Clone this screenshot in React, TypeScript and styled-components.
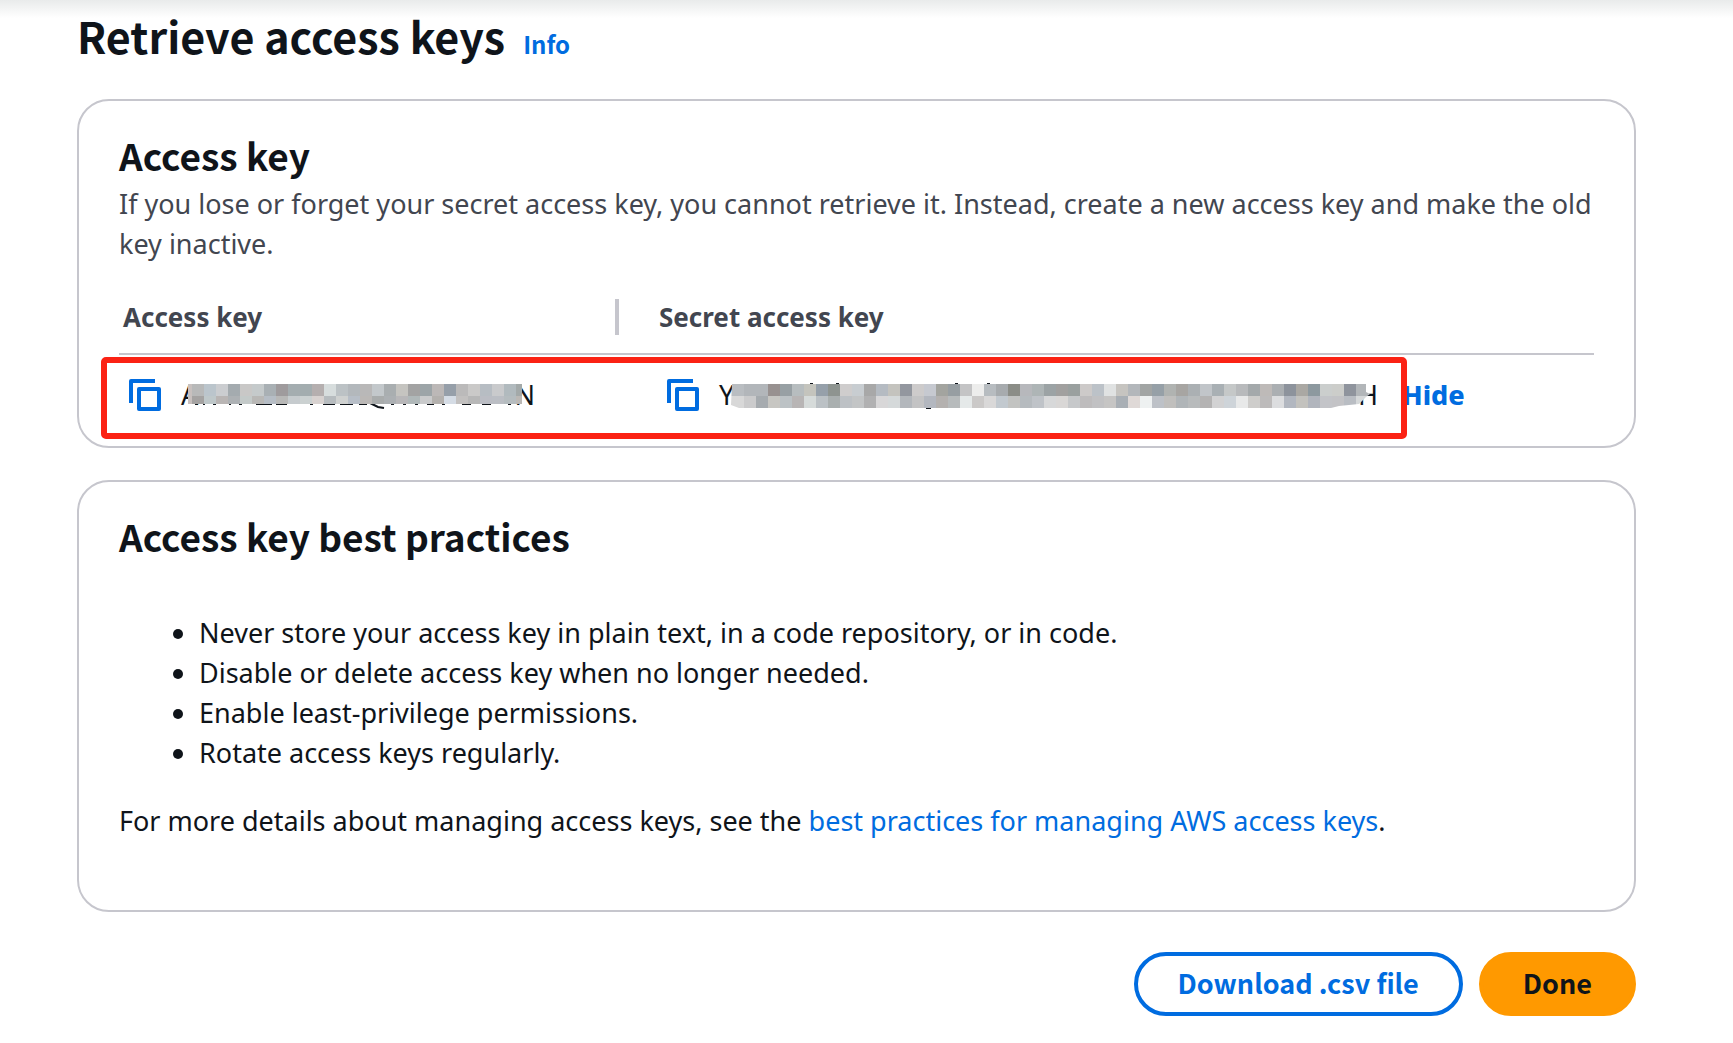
import React from 'react';
import styled, { createGlobalStyle } from 'styled-components';

const headingFont = `'Noto Sans CJK SC', 'Noto Sans', sans-serif`;
const bodyFont = `'Noto Sans', 'Open Sans', sans-serif`;

const color = {
  heading: '#0f141a',
  text: '#0f141a',
  muted: '#424650',
  border: '#c6c6cd',
  link: '#006ce0',
  primary: '#ff9900',
  highlight: '#fb2214',
};

const GlobalStyle = createGlobalStyle`
  * { box-sizing: border-box; }
  body {
    margin: 0;
    background: #ffffff;
    color: ${color.text};
    font: 400 27px/40px ${bodyFont};
  }
`;

const Page = styled.div`
  padding: 7px 97px 24px 77px;
  background: linear-gradient(#e9ebeb, #ffffff) top / 100% 18px no-repeat;
`;

const PageHeader = styled.header`
  display: flex;
  align-items: baseline;
  gap: 18px;
  margin-bottom: 36px;
`;

const PageTitle = styled.h1`
  margin: 0;
  font: 700 43px/56px ${headingFont};
  color: ${color.heading};
`;

const Link = styled.a`
  color: ${color.link};
  text-decoration: none;
`;

const InfoLink = styled(Link)`
  font: 700 24px/32px ${headingFont};
`;

const Card = styled.section<{ $bottom: number }>`
  border: 2px solid ${color.border};
  border-radius: 32px;
  padding: 30px 40px ${p => p.$bottom}px;
  background: #ffffff;

  & + & {
    margin-top: 32px;
  }
`;

const CardTitle = styled.h2`
  margin: 0;
  font: 700 37px/48px ${headingFont};
  color: ${color.heading};
`;

const Description = styled.p`
  margin: 5px 0 18px;
  color: ${color.muted};
`;

const TableFrame = styled.div`
  position: relative;
`;

const KeyTable = styled.table`
  width: 100%;
  table-layout: fixed;
  border-collapse: separate;
  border-spacing: 0;
`;

const KeyColumn = styled.col`
  width: 500px;
`;

const HeadCell = styled.th<{ $inset: number }>`
  padding: 15px 0 16px ${p => p.$inset}px;
  border-bottom: 2px solid ${color.border};
  color: ${color.muted};
  font: 700 26px/40px ${bodyFont};
  text-align: left;
`;

const HeadContent = styled.div`
  display: flex;
  align-items: center;
  justify-content: space-between;
`;

const Divider = styled.span`
  width: 4px;
  height: 36px;
  background: ${color.border};
`;

const Cell = styled.td<{ $inset: number }>`
  padding: 20px 0 20px ${p => p.$inset}px;
`;

const CellContent = styled.div`
  display: flex;
  align-items: center;
  gap: 20px;
`;

const IconButton = styled.button`
  display: flex;
  padding: 0;
  border: 0;
  background: none;
  color: ${color.link};
  cursor: pointer;
`;

const KeyValue = styled.span<{ $width: number }>`
  position: relative;
  display: flex;
  justify-content: space-between;
  flex: none;
  width: ${p => p.$width}px;
`;

const MosaicSvg = styled.svg`
  position: absolute;
  left: 0;
  top: 8px;
`;

const TextButton = styled.button`
  padding: 0 4px;
  border: 0;
  background: none;
  color: ${color.link};
  font: 800 27px/40px ${bodyFont};
  cursor: pointer;
`;

const Highlight = styled.div`
  position: absolute;
  left: -18px;
  top: 75px;
  width: 1306px;
  height: 82px;
  border: 6px solid ${color.highlight};
  border-radius: 5px;
  pointer-events: none;
`;

const PracticeList = styled.ul`
  margin: 53px 0 28px;
  padding: 0 0 0 80px;
`;

const Paragraph = styled.p`
  margin: 0;
`;

const Actions = styled.footer`
  display: flex;
  justify-content: flex-end;
  gap: 16px;
  margin-top: 40px;
`;

const Button = styled.button<{ $primary?: boolean }>`
  height: 64px;
  padding: 0 40px 2px;
  border: 4px solid ${p => (p.$primary ? color.primary : color.link)};
  border-radius: 32px;
  background: ${p => (p.$primary ? color.primary : '#ffffff')};
  color: ${p => (p.$primary ? color.heading : color.link)};
  font: 700 27px/40px ${headingFont};
  cursor: pointer;
`;

const CopyIcon = () => (
  <svg width="32" height="32" viewBox="0 0 32 32" fill="none" stroke="currentColor" strokeWidth="4" strokeLinejoin="round" aria-hidden="true">
    <path d="M2 24V2H26" />
    <path d="M10 10H30V30H10Z" />
  </svg>
);

type Mark = [x: number, y: number, width: number, height: number];

interface MosaicProps {
  id: string;
  width: number;
  start: number;
  rows: string[];
  outline: string;
  marks: Mark[];
  tail?: string;
}

const CELL = 12;

/* Pixelated cover drawn over the hidden part of a key. */
const Mosaic = ({ id, width, start, rows, outline, marks, tail }: MosaicProps) => (
  <MosaicSvg width={width} height="32" viewBox={`0 0 ${width} 32`} aria-hidden="true" shapeRendering="crispEdges">
    <clipPath id={id}>
      <path d={outline} />
    </clipPath>
    {marks.map(([x, y, w, h]) => (
      <rect key={`${x}-${y}`} x={x} y={y} width={w} height={h} fill={color.text} />
    ))}
    {tail && <path d={tail} stroke={color.text} strokeWidth="2" fill="none" shapeRendering="auto" />}
    <g clipPath={`url(#${id})`}>
      {rows.map((row, r) =>
        row.split(' ').map((c, i) => (
          <rect key={`${r}-${i}`} x={start + i * CELL} y={1 + r * CELL} width={CELL} height={CELL} fill={`#${c}`} />
        )),
      )}
    </g>
  </MosaicSvg>
);

const accessRows = [
  'c8c0be b8b9b9 bbc5cc cbcdd0 a4abaf c9c8c7 c5cacb a9b0b4 9f9b9d a4adb0 a3adaf b5afaf d7dddd bcc2c5 b3b8bc b9b8b8 c3c8cb a9aeb0 c5c4c0 a3a3a3 9da5a8 bcb8b7 969fa9 bbbaba cac9c8 b7bdc3 c9cacc b1babe a3a9a9',
  'c8c0be a5a3a2 bfc8ca b9b5b4 adb1b4 c4cac9 b9b8b6 b6bdc5 b8b8b7 c6cbce cbd1d1 d8d2d0 b7bcbf cfd1d0 b7bec7 bbb8b6 a9acac acb0b3 b8b7b9 b0b8b9 cacbcc b4b1ae d5dce5 c2c0bf b7b7b7 bbbdc4 bbbec4 b5bcbf bbb8b5',
];

const secretRows = [
  'b9bdc1 b9bdc1 b2b6ba b2b6ba 989190 98a0a4 b7bdbf c4c4bd 96a0aa 8e9490 cfcdcd c8cdd1 a8a8a8 b5bbc2 c4c3be 93979f cdcbcb c6c9d0 a3a49f 979ea2 c4c4c5 ededec b7bcc0 a7abae 8b8d87 b7b8bc aeb5b6 9ca3a5 a1a09f 9aa09f cdcac9 bcc2c8 e0e2e2 c6c4c0 b3b7bb a2a5a4 96a0a7 b0b3b1 a7a5a2 abb0b3 c1c5c9 a9b0b4 c5c8c8 b8babc a4a9ab bebab8 abafb2 8d939c aaa8a3 8d999f cbcecd cccdca 8f949d b2b6b9 c8cacc',
  'd8d8d8 d8d8d8 cbcbcc a6abaf c7c6c2 bcc2c5 b8b5b5 d6dbda bbc1c5 a9afaf bdc1c5 c3c5c6 b1b1b2 d8d7d8 d5d9da b3b7bc c3c3c4 b3b7bf b4b1af b7bbbc e5e9e9 cbc9c8 d9d8d8 c2c9cf c2c3c1 b6bbbf bfc3c8 d7d8d9 d9d7d6 c6c8ca bebcbd c1c1c3 c6c5c4 a9afb5 dfd9d7 eef1f1 bdc1c7 c0bfbd b0b5b8 b8bbbc b4b3b3 d2d2d3 ced4d9 e8e9e9 cecdcb bdbbbb dcdddf b2b7c0 c3c2be b1b5bd c3c4c8 c3c3c6 b9bdc3 d5d8d9 d5d8d9',
];

const accessMarks: Mark[] = [
  [14, 21, 3, 1], [22, 21, 2, 1], [32, 21, 3, 1], [48, 21, 2, 1], [58, 21, 3, 1], [75, 21, 16, 1],
  [95, 21, 11, 1], [129, 21, 3, 1], [142, 21, 12, 1], [159, 21, 13, 1], [178, 20, 8, 2],
  [210, 21, 3, 1], [222, 21, 3, 1], [234, 21, 3, 1], [246, 21, 7, 1], [261, 21, 3, 1],
  [281, 21, 9, 1], [301, 21, 9, 1], [327, 21, 3, 1],
];

const secretMarks: Mark[] = [
  [91, 0, 3, 1], [117, 0, 3, 1], [236, 0, 3, 1], [268, 0, 3, 1], [207, 25, 5, 1],
];

export default function App() {
  return (
    <>
      <GlobalStyle />
      <Page>
        <PageHeader>
          <PageTitle>Retrieve access keys</PageTitle>
          <InfoLink href="#info">Info</InfoLink>
        </PageHeader>

        <main>
          <Card $bottom={11}>
            <CardTitle>Access key</CardTitle>
            <Description>
              If you lose or forget your secret access key, you cannot retrieve it. Instead, create a new access key and
              make the old key inactive.
            </Description>
            <TableFrame>
              <KeyTable>
                <colgroup>
                  <KeyColumn />
                  <col />
                </colgroup>
                <thead>
                  <tr>
                    <HeadCell $inset={4} scope="col">
                      <HeadContent>
                        Access key
                        <Divider />
                      </HeadContent>
                    </HeadCell>
                    <HeadCell $inset={40} scope="col">
                      <HeadContent>Secret access key</HeadContent>
                    </HeadCell>
                  </tr>
                </thead>
                <tbody>
                  <tr>
                    <Cell $inset={10}>
                      <CellContent>
                        <IconButton type="button" aria-label="Copy access key">
                          <CopyIcon />
                        </IconButton>
                        <KeyValue $width={354}>
                          <span>A</span>
                          <span>N</span>
                          <Mosaic
                            id="access-cover"
                            width={354}
                            start={-1}
                            rows={accessRows}
                            outline="M7 1H341V21H7Z"
                            marks={accessMarks}
                            tail="M187 19L197 24L203 25"
                          />
                        </KeyValue>
                      </CellContent>
                    </Cell>
                    <Cell $inset={48}>
                      <CellContent>
                        <IconButton type="button" aria-label="Copy secret access key">
                          <CopyIcon />
                        </IconButton>
                        <KeyValue $width={659}>
                          <span>Y</span>
                          <span>H</span>
                          <Mosaic
                            id="secret-cover"
                            width={659}
                            start={1}
                            rows={secretRows}
                            outline="M13 1H647V9L651 11L647 14L640 21L620 23L612 25H20L12 22Z"
                            marks={secretMarks}
                          />
                        </KeyValue>
                        <TextButton type="button">Hide</TextButton>
                      </CellContent>
                    </Cell>
                  </tr>
                </tbody>
              </KeyTable>
              <Highlight />
            </TableFrame>
          </Card>

          <Card $bottom={69}>
            <CardTitle>Access key best practices</CardTitle>
            <PracticeList>
              <li>Never store your access key in plain text, in a code repository, or in code.</li>
              <li>Disable or delete access key when no longer needed.</li>
              <li>Enable least-privilege permissions.</li>
              <li>Rotate access keys regularly.</li>
            </PracticeList>
            <Paragraph>
              For more details about managing access keys, see the{' '}
              <Link href="#best-practices">best practices for managing AWS access keys</Link>.
            </Paragraph>
          </Card>
        </main>

        <Actions>
          <Button type="button">Download .csv file</Button>
          <Button type="button" $primary>
            Done
          </Button>
        </Actions>
      </Page>
    </>
  );
}
